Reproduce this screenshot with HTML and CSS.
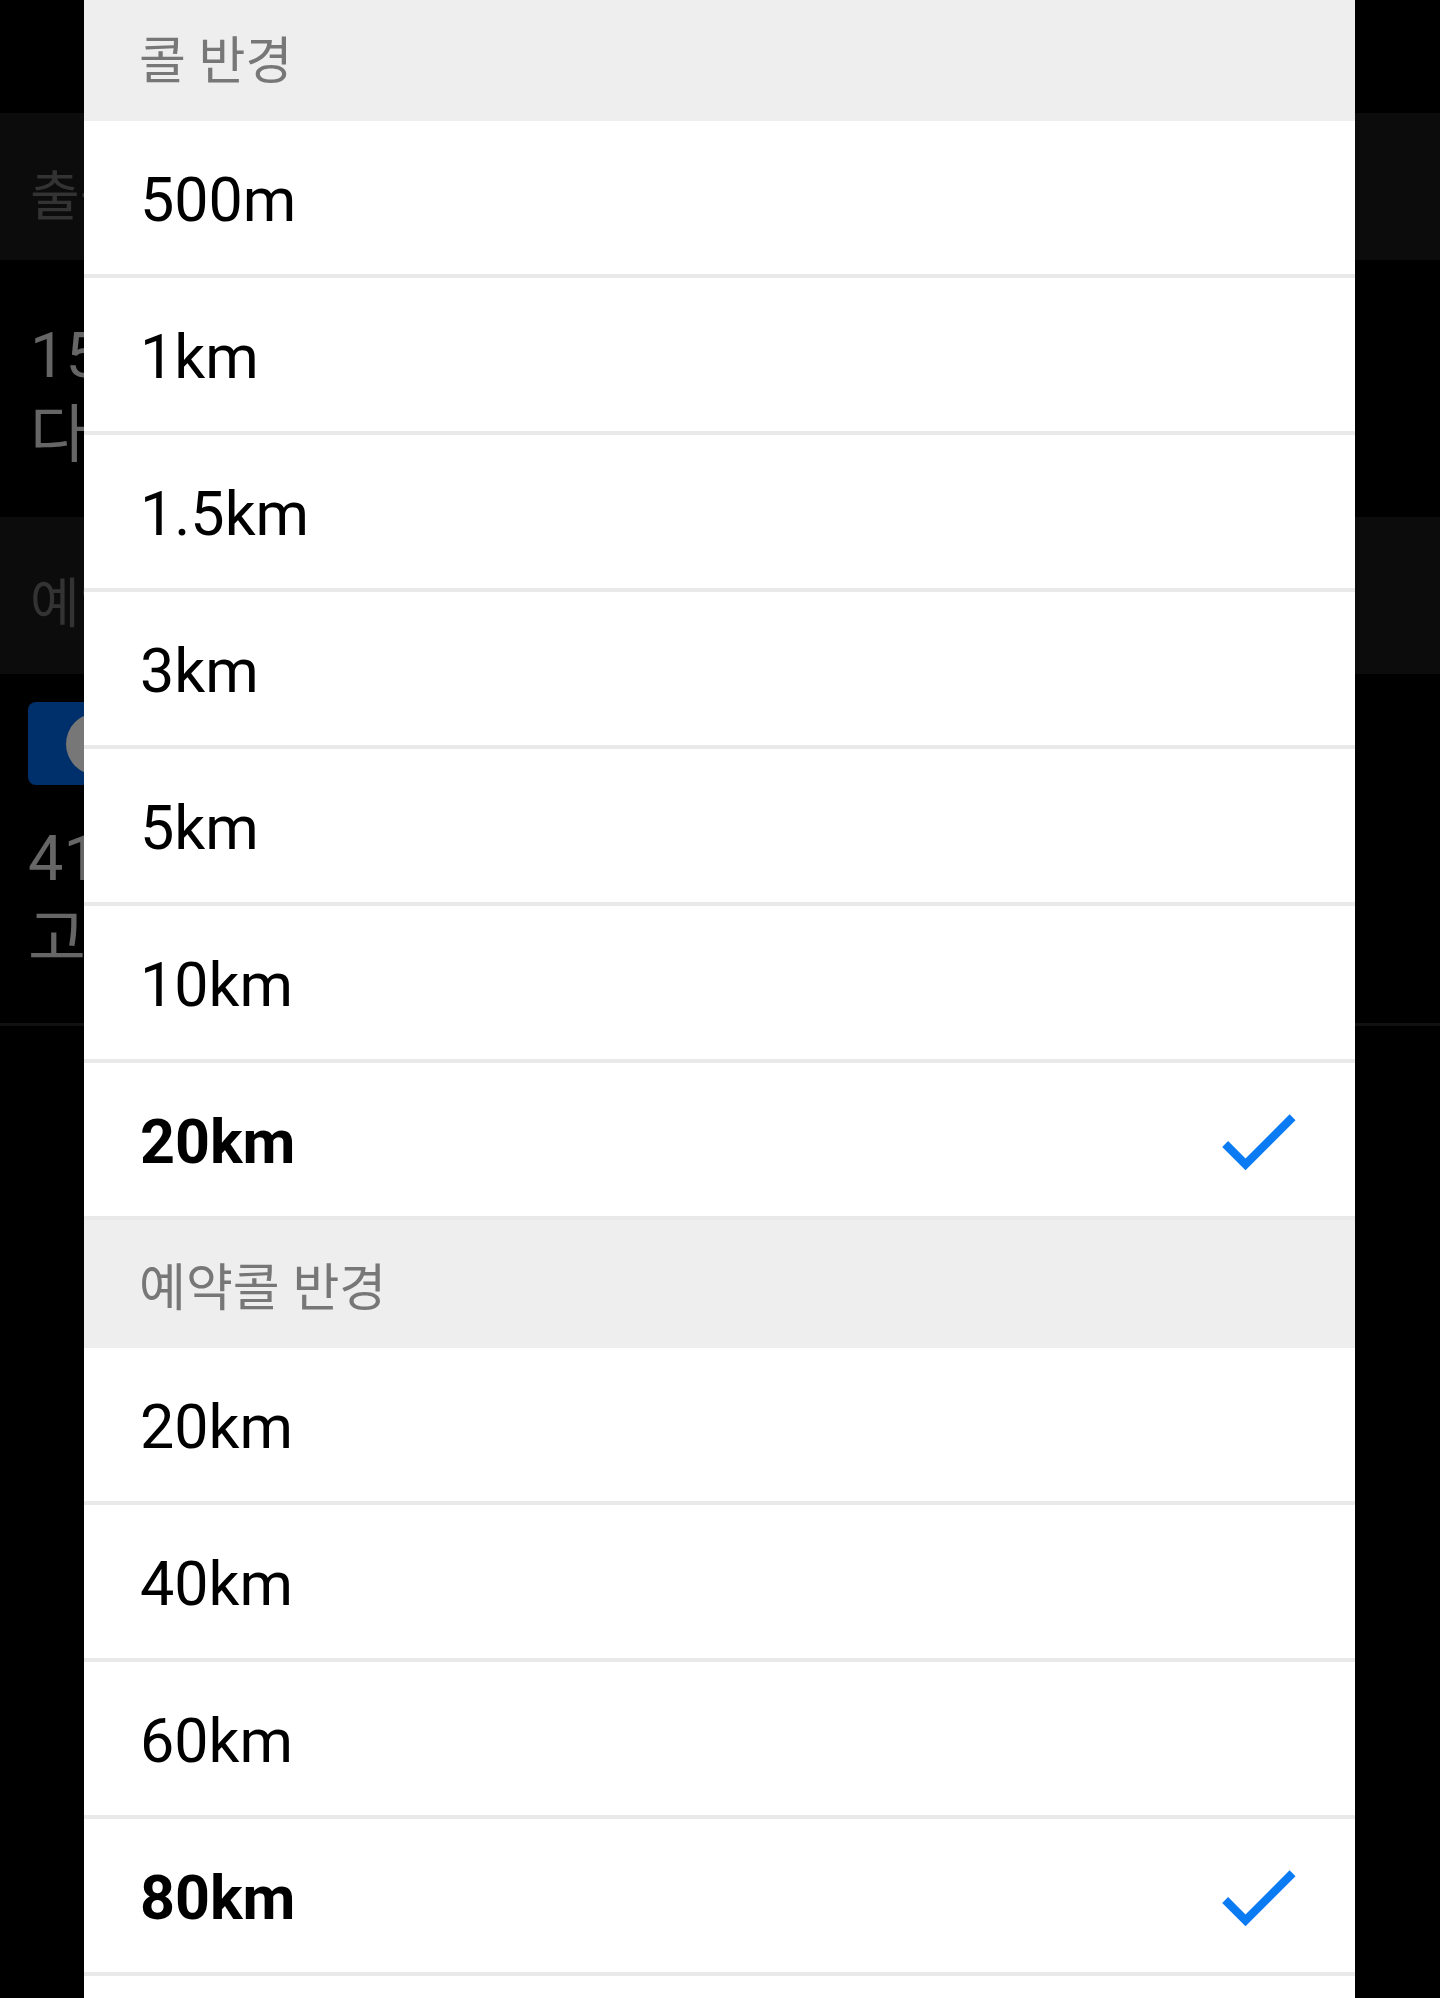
FILE: index.html
```html
<!DOCTYPE html>
<html lang="ko">
<head>
<meta charset="utf-8">
<title>콜 반경</title>
<link rel="stylesheet" href="styles.css">
</head>
<body>
<div class="screen">
  <div class="bg">
    <div class="bg-top"></div>
    <div class="band band-1"><span class="dim">출근</span></div>
    <div class="info">
      <p class="gray">15분</p>
      <p class="gray">다음</p>
    </div>
    <div class="band band-2"><span class="dim">예약</span></div>
    <div class="block">
      <div class="toggle"><span class="knob"></span></div>
      <p class="gray">41건</p>
      <p class="gray">고객</p>
    </div>
    <div class="bg-line"></div>
  </div>

  <div class="sheet">
    <div class="sec-head">콜 반경</div>
    <ul class="opts">
      <li class="opt">500m</li>
      <li class="opt">1km</li>
      <li class="opt">1.5km</li>
      <li class="opt">3km</li>
      <li class="opt">5km</li>
      <li class="opt">10km</li>
      <li class="opt sel">20km
        <svg class="check" viewBox="0 0 24 24" width="100" height="100"><path d="M9 16.17L4.83 12l-1.42 1.41L9 19 21 7l-1.41-1.41z"/></svg>
      </li>
    </ul>
    <div class="sec-head">예약콜 반경</div>
    <ul class="opts">
      <li class="opt">20km</li>
      <li class="opt">40km</li>
      <li class="opt">60km</li>
      <li class="opt sel">80km
        <svg class="check" viewBox="0 0 24 24" width="100" height="100"><path d="M9 16.17L4.83 12l-1.42 1.41L9 19 21 7l-1.41-1.41z"/></svg>
      </li>
    </ul>
    <div class="sheet-rest"></div>
  </div>
</div>
</body>
</html>
```

FILE: styles.css
```css
html, body {
  margin: 0;
  padding: 0;
  background: #000;
  height: 1998px;
  overflow: hidden;
}

body {
  font-family: Roboto, "Noto Sans CJK KR", sans-serif;
}

.screen {
  position: relative;
  width: 1440px;
  height: 1998px;
  overflow: hidden;
}

/* dimmed background page */
.bg-top {
  height: 113px;
}

.band {
  background: #0c0c0c;
  display: flex;
  align-items: center;
  padding-left: 30px;
  box-sizing: border-box;
}

.band-1 {
  height: 147px;
  padding-top: 12px;
}

.band-2 {
  height: 157px;
  padding-top: 8px;
}

.dim {
  color: #333;
  font-size: 54px;
  white-space: nowrap;
}

.gray {
  margin: 0;
  color: #666;
  font-size: 63px;
  line-height: 79px;
  white-space: nowrap;
}

.info {
  height: 257px;
  padding: 56px 0 0 30px;
  box-sizing: border-box;
}

.block {
  height: 349px;
  padding: 28px 0 0 28px;
  box-sizing: border-box;
}

.block .gray {
  line-height: 80px;
}

.toggle {
  width: 220px;
  height: 83px;
  background: #00306c;
  border-radius: 8px;
  display: flex;
  align-items: center;
  padding-left: 38px;
  box-sizing: border-box;
  margin-bottom: 34px;
}

.knob {
  width: 62px;
  height: 62px;
  border-radius: 50%;
  background: #777;
}

.bg-line {
  height: 3px;
  background: #111;
}

/* bottom sheet */
.sheet {
  position: absolute;
  top: -7px;
  left: 84px;
  width: 1271px;
  background: #fff;
}

.sec-head {
  height: 128px;
  background: #eeeeee;
  color: #777;
  font-size: 51px;
  display: flex;
  align-items: center;
  padding-left: 55px;
}

.opts {
  list-style: none;
  margin: 0;
  padding: 0;
}

.opt {
  border-bottom: 4px solid #e9e9e9;
  display: flex;
  align-items: center;
  justify-content: space-between;
  padding: 4px 47px 0 56px;
  box-sizing: content-box;
  height: 149px;
  font-size: 61px;
  color: #000;
}

.opt.sel {
  font-weight: 700;
}

.check {
  fill: #0a7bf2;
  margin-top: -2px;
}

.sheet-rest {
  height: 153px;
}
```
